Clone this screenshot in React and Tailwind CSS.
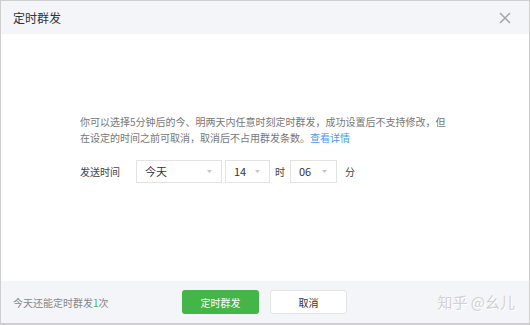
import React from 'react';

const font = { fontFamily: '"Microsoft YaHei", "Noto Sans CJK SC", "Noto Sans", sans-serif' };

const Select = ({ value, width }) => (
  <div className={`h-[23px] ${width} border border-[#e3e3e3] bg-white flex items-center justify-between pl-2 pr-[9px]`}>
    <span className="text-[11px] text-[#333]">{value}</span>
    <svg width="5" height="3" viewBox="0 0 5 3">
      <path d="M0 0H5L2.5 3Z" fill="#c4c4c4" />
    </svg>
  </div>
);

const App = () => (
  <div className="w-[530px] h-[325px] border border-[#cfcfcf] border-b-2 bg-white flex flex-col overflow-hidden" style={font}>
    <div className="h-[33px] bg-[#f4f5f9] flex items-center justify-between pl-[12px] pr-[18px] shrink-0">
      <span className="text-[12px] text-[#333]">定时群发</span>
      <svg width="12" height="12" viewBox="0 0 12 12">
        <path d="M1 1L11 11M11 1L1 11" stroke="#a5a5a5" strokeWidth="1.5" />
      </svg>
    </div>

    <div className="flex-1 pl-[79px] pt-[80px]">
      <p className="text-[10px] leading-[16px] text-[#777]">
        你可以选择5分钟后的今、明两天内任意时刻定时群发，成功设置后不支持修改，但
        <br />
        在设定的时间之前可取消，取消后不占用群发条数。
        <span className="text-[#459ae9]">查看详情</span>
      </p>
      <div className="flex items-center mt-[14px] text-[10px] text-[#444]">
        <span className="w-[56px]">发送时间</span>
        <Select value="今天" width="w-[86px]" />
        <div className="w-[3px]" />
        <Select value="14" width="w-[45px]" />
        <span className="mx-[5px]">时</span>
        <Select value="06" width="w-[47px]" />
        <span className="ml-[8px]">分</span>
      </div>
    </div>

    <div className="h-[42px] bg-[#f4f5f9] flex items-center shrink-0 pl-[12px] pr-[14px]">
      <span className="w-[169px] text-[10px] text-[#888]">
        今天还能定时群发<span className="text-[#44b549]">1</span>次
      </span>
      <button className="w-[77px] h-[24px] rounded-[3px] bg-[#44b549] text-white text-[10px]">定时群发</button>
      <button className="ml-[11px] w-[77px] h-[24px] rounded-[3px] bg-white border border-[#e4e4e4] text-[#333] text-[10px]">取消</button>
      <span className="ml-auto text-[15px] text-[#d2d2d2] [text-shadow:1px_1px_0_#fff]">知乎 @幺儿</span>
    </div>
  </div>
);

export default App;
